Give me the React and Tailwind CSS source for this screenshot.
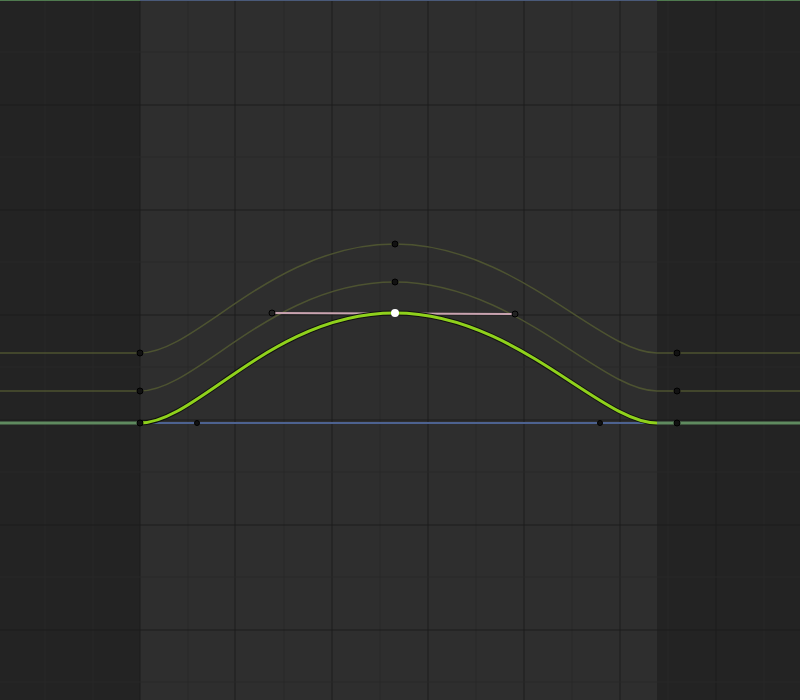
import React from "react";

const xs = [45, 93, 140, 188, 235, 284, 332, 380, 428, 476, 524, 572, 620, 668, 716, 764];
const ys = [52, 105, 157, 210, 262, 315, 367, 420, 472, 525, 577, 630, 682];
const majorX = [140, 235, 332, 428, 524, 620, 716];
const majorY = [105, 210, 315, 420, 525, 630];

function bell(y0, y1) {
  return `M0 ${y0} L140 ${y0} C197 ${y0} 272 ${y1} 395 ${y1} C515 ${y1} 600 ${y0} 657 ${y0} L800 ${y0}`;
}

function Key({ x, y, fill = "#111", r = 3 }) {
  return <circle cx={x} cy={y} r={r} fill={fill} stroke="#000" strokeWidth="1" />;
}

export default function App() {
  return (
    <div className="relative w-[800px] h-[700px] overflow-hidden flex bg-[#232323]">
      <div className="w-[140px] h-full bg-[#232323]" />
      <div className="w-[517px] h-full bg-[#2e2e2e]" />
      <div className="flex-1 h-full bg-[#232323]" />
      <svg className="absolute inset-0" width="800" height="700">
        {xs.map((x) => (
          <line key={"x" + x} x1={x} y1="0" x2={x} y2="700" stroke={majorX.includes(x) ? "#1c1c1c" : "#282828"} strokeWidth="1" />
        ))}
        {ys.map((y) => (
          <line key={"y" + y} x1="0" y1={y} x2="800" y2={y} stroke={majorY.includes(y) ? "#1c1c1c" : "#282828"} strokeWidth="1" />
        ))}
        <line x1="0" y1="0.5" x2="140" y2="0.5" stroke="#4f7a4f" />
        <line x1="140" y1="0.5" x2="657" y2="0.5" stroke="#4a5a7a" />
        <line x1="657" y1="0.5" x2="800" y2="0.5" stroke="#4f7a4f" />

        <path d={bell(353, 244)} fill="none" stroke="#4d5331" strokeWidth="1.5" />
        <path d={bell(391, 282)} fill="none" stroke="#4d5331" strokeWidth="1.5" />

        <line x1="0" y1="423" x2="140" y2="423" stroke="#5f8a5f" strokeWidth="3" />
        <line x1="657" y1="423" x2="800" y2="423" stroke="#5f8a5f" strokeWidth="3" />
        <line x1="140" y1="423" x2="657" y2="423" stroke="#4d6290" strokeWidth="2" />

        <line x1="272" y1="313" x2="515" y2="314" stroke="#c9a3b0" strokeWidth="2" />
        <path d="M140 423 C197 423 272 313 395 313 C515 313 600 423 657 423" fill="none" stroke="#111" strokeWidth="5" />
        <path d="M140 423 C197 423 272 313 395 313 C515 313 600 423 657 423" fill="none" stroke="#8fd11c" strokeWidth="3" />

        {[353, 391].map((y) => (
          <g key={y}>
            <Key x={140} y={y} />
            <Key x={657 + 20} y={y} />
          </g>
        ))}
        <Key x={395} y={244} />
        <Key x={395} y={282} />
        <Key x={140} y={423} />
        <Key x={197} y={423} r={2.5} />
        <Key x={600} y={423} r={2.5} />
        <Key x={677} y={423} />
        <Key x={272} y={313} fill="#222" />
        <Key x={515} y={314} fill="#222" />
        <circle cx="395" cy="313" r="4" fill="#fff" />
      </svg>
    </div>
  );
}
